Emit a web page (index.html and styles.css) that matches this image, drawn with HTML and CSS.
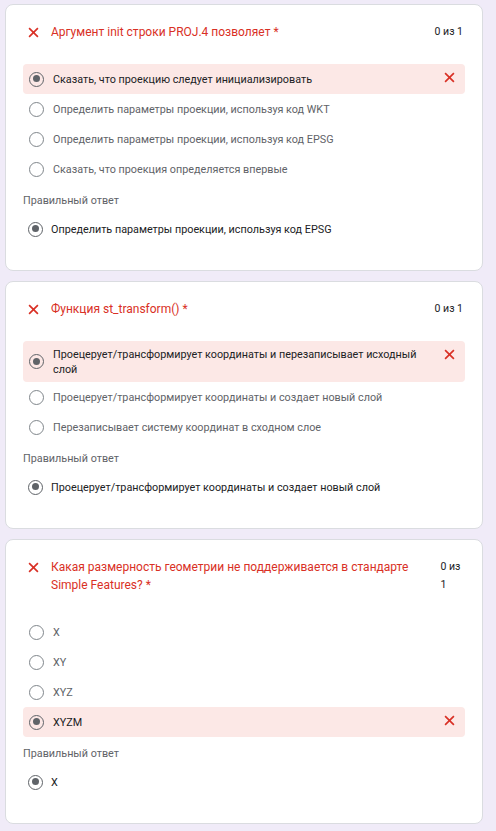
FILE: index.html
```html
<!DOCTYPE html>
<html lang="ru">
<head>
<meta charset="utf-8">
<title>Результаты</title>
<link rel="stylesheet" href="styles.css">
</head>
<body>
<div class="page">
  <section class="card">
    <div class="q-head">
      <svg class="x-icon" viewBox="0 0 10 10"><path d="M1 1L9 9M9 1L1 9"/></svg>
      <div class="q-title">Аргумент init строки PROJ.4 позволяет *</div>
      <div class="score">0 из 1</div>
    </div>
    <div class="options">
      <div class="opt opt--wrong"><span class="radio radio--on"></span><span class="opt-text">Сказать, что проекцию следует инициализировать</span><svg class="x-icon x-icon--row" viewBox="0 0 10 10"><path d="M1 1L9 9M9 1L1 9"/></svg></div>
      <div class="opt"><span class="radio"></span><span class="opt-text">Определить параметры проекции, используя код WKT</span></div>
      <div class="opt"><span class="radio"></span><span class="opt-text">Определить параметры проекции, используя код EPSG</span></div>
      <div class="opt"><span class="radio"></span><span class="opt-text">Сказать, что проекция определяется впервые</span></div>
    </div>
    <div class="correct-label">Правильный ответ</div>
    <div class="correct"><span class="radio radio--on"></span><span class="correct-text">Определить параметры проекции, используя код EPSG</span></div>
  </section>

  <section class="card">
    <div class="q-head">
      <svg class="x-icon" viewBox="0 0 10 10"><path d="M1 1L9 9M9 1L1 9"/></svg>
      <div class="q-title">Функция st_transform() *</div>
      <div class="score">0 из 1</div>
    </div>
    <div class="options">
      <div class="opt opt--wrong"><span class="radio radio--on"></span><span class="opt-text">Проецерует/трансформирует координаты и перезаписывает исходный слой</span><svg class="x-icon x-icon--row" viewBox="0 0 10 10"><path d="M1 1L9 9M9 1L1 9"/></svg></div>
      <div class="opt"><span class="radio"></span><span class="opt-text">Проецерует/трансформирует координаты и создает новый слой</span></div>
      <div class="opt"><span class="radio"></span><span class="opt-text">Перезаписывает систему координат в сходном слое</span></div>
    </div>
    <div class="correct-label">Правильный ответ</div>
    <div class="correct"><span class="radio radio--on"></span><span class="correct-text">Проецерует/трансформирует координаты и создает новый слой</span></div>
  </section>

  <section class="card">
    <div class="q-head">
      <svg class="x-icon" viewBox="0 0 10 10"><path d="M1 1L9 9M9 1L1 9"/></svg>
      <div class="q-title">Какая размерность геометрии не поддерживается в стандарте Simple Features? *</div>
      <div class="score">0 из 1</div>
    </div>
    <div class="options">
      <div class="opt"><span class="radio"></span><span class="opt-text">X</span></div>
      <div class="opt"><span class="radio"></span><span class="opt-text">XY</span></div>
      <div class="opt"><span class="radio"></span><span class="opt-text">XYZ</span></div>
      <div class="opt opt--wrong"><span class="radio radio--on"></span><span class="opt-text">XYZM</span><svg class="x-icon x-icon--row" viewBox="0 0 10 10"><path d="M1 1L9 9M9 1L1 9"/></svg></div>
    </div>
    <div class="correct-label">Правильный ответ</div>
    <div class="correct"><span class="radio radio--on"></span><span class="correct-text">X</span></div>
  </section>
</div>
</body>
</html>
```
FILE: styles.css
```css
html, body {
  margin: 0;
  padding: 0;
  background: #f0ebf8;
}
body {
  font-family: Roboto, "Liberation Sans", Arial, sans-serif;
  color: #202124;
}
.page {
  padding: 4px 13px 0 5px;
  display: flex;
  flex-direction: column;
  gap: 10px;
}
.card {
  box-sizing: border-box;
  width: 478px;
  background: #fff;
  border: 1px solid #dadce0;
  border-radius: 8px;
  padding: 18px 17px 26px 17px;
}
.q-head {
  display: flex;
  align-items: flex-start;
  padding: 0 2px 0 4px;
  margin-bottom: 23px;
}
.x-icon {
  width: 11px;
  height: 11px;
  flex: 0 0 auto;
  fill: none;
  stroke: #d93025;
  stroke-width: 1.5;
}
.q-head .x-icon {
  margin: 4px 12px 0 1px;
}
.q-title {
  flex: 1 1 auto;
  font-size: 12px;
  line-height: 18px;
  color: #d93025;
}
.score {
  flex: 0 1 auto;
  margin-left: 24px;
  font-size: 10.5px;
  line-height: 18px;
  color: #202124;
}
.options {
  display: flex;
  flex-direction: column;
}
.opt {
  display: flex;
  align-items: center;
  min-height: 30px;
  box-sizing: border-box;
  padding: 5.5px 10px 5.5px 6px;
  border-radius: 4px;
}
.opt--wrong {
  background: #fce8e6;
}
.radio {
  box-sizing: border-box;
  width: 15px;
  height: 15px;
  flex: 0 0 auto;
  border: 1.5px solid #80868b;
  border-radius: 50%;
  position: relative;
}
.radio--on {
  border-color: #5f6368;
}
.radio--on::after {
  content: "";
  position: absolute;
  left: 2.5px;
  top: 2.5px;
  width: 7px;
  height: 7px;
  border-radius: 50%;
  background: #5f6368;
}
.opt-text {
  flex: 1 1 auto;
  margin-left: 9px;
  font-size: 10.8px;
  line-height: 15px;
  color: #5f6368;
}
.opt--wrong .opt-text {
  color: #202124;
}
.x-icon--row {
  align-self: flex-start;
  margin: 2px 0 0 16px;
}
.correct-label {
  margin-top: 8px;
  font-size: 10.8px;
  line-height: 18px;
  color: #5f6368;
}
.correct {
  display: flex;
  align-items: center;
  height: 30px;
  margin-top: 4px;
  padding-left: 5px;
}
.correct-text {
  margin-left: 8px;
  font-size: 10.8px;
  line-height: 15px;
  color: #202124;
}
```
